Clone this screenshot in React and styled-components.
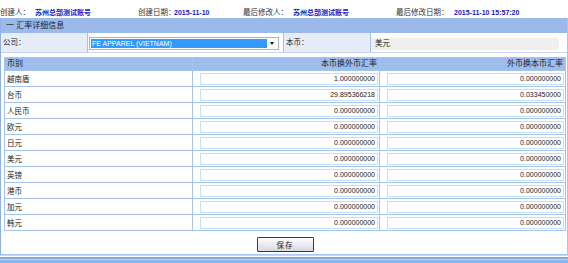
import React from 'react';
import styled, { createGlobalStyle } from 'styled-components';

const Global = createGlobalStyle`
  html, body { margin: 0; padding: 0; background: #fff; }
  body {
    font-family: "Liberation Sans", "Noto Sans CJK SC", sans-serif;
    font-size: 7px;
    color: #222;
  }
  * { box-sizing: border-box; }
`;

const Page = styled.div`
  width: 568px;
  height: 263px;
  overflow: hidden;
  background: #fff;
`;

const InfoBar = styled.div`
  display: grid;
  grid-template-columns: 35px 103px 36px 69px 50px 103px 58px 1fr;
  height: 18px;
  padding-top: 8px;
  line-height: 10px;
  white-space: nowrap;
`;

const InfoLabel = styled.span`
  color: #333;
  font-size: 7.5px;
`;

const InfoValue = styled.span`
  color: #1414c8;
  font-weight: bold;
`;

const Panel = styled.div`
  height: 237px;
  border-left: 1px solid #8eb0e6;
  border-right: 1px solid #a9c6f0;
  border-bottom: 1px solid #a9c6f0;
  display: flex;
  flex-direction: column;
`;

const TitleBar = styled.div`
  height: 15px;
  background: #9bb9ea;
  padding-left: 5px;
  font-size: 8px;
  line-height: 15px;
  color: #1e1e1e;
  white-space: nowrap;
`;

const CompanyRow = styled.div`
  display: grid;
  grid-template-columns: 87px 196px 87px 1fr;
  height: 20px;
  border-bottom: 1px solid #c4d6f2;
`;

const FieldLabel = styled.div`
  background: #e6edf8;
  border-right: 1px solid #a4c2ee;
  padding-left: 2px;
  line-height: 19px;
  font-size: 7.5px;
  white-space: nowrap;
`;

const FieldValue = styled.div`
  padding: ${(p) => (p.$select ? '4px 0 0 1px' : '5px 0 0 0')};
  border-right: ${(p) => (p.$divider ? '1px solid #a4c2ee' : 'none')};
`;

const SelectBox = styled.div`
  width: 190px;
  height: 13px;
  border: 1px solid #a9b4c2;
  background: #fff;
  display: flex;
  align-items: stretch;
  padding: 1px;
`;

const SelectText = styled.div`
  flex: 1;
  background: #3399ff;
  color: #fff;
  line-height: 9px;
  padding-left: 1px;
  white-space: nowrap;
`;

const SelectArrow = styled.div`
  width: 10px;
  display: flex;
  align-items: center;
  justify-content: center;
  &::after {
    content: '';
    border-left: 2.5px solid transparent;
    border-right: 2.5px solid transparent;
    border-top: 3px solid #111;
  }
`;

const ReadField = styled.div`
  width: 188px;
  height: 12px;
  background: #efefef;
  padding-left: 4px;
  line-height: 12px;
  font-size: 7.5px;
`;

const Table = styled.div`
  margin: 4px 0 0 3px;
  width: 562px;
  display: grid;
  grid-template-columns: 188px 187px 186px;
  border-left: 1px solid #a4c4f0;
  border-top: 1px solid #a4c4f0;
`;

const HeadCell = styled.div`
  height: 13px;
  background: #9ebdec;
  border-right: 1px solid #a4c4f0;
  border-bottom: 1px solid #a4c4f0;
  font-size: 8px;
  line-height: 12px;
  color: #1a1a1a;
  text-align: ${(p) => (p.$right ? 'right' : 'left')};
  padding: 0 2px;
  white-space: nowrap;
`;

const Cell = styled.div`
  height: 16px;
  border-right: 1px solid #a4c4f0;
  border-bottom: 1px solid #a4c4f0;
  display: flex;
  align-items: center;
  padding: ${(p) => (p.$input ? '0 1px 0 7px' : '0 2px')};
  color: #1a1a1a;
  font-size: ${(p) => (p.$input ? '7px' : '7.5px')};
  white-space: nowrap;
`;

const RateInput = styled.div`
  width: 100%;
  height: 12px;
  border: 1px solid #c3e1f6;
  background: #fff;
  text-align: right;
  padding-right: 2px;
  line-height: 10px;
  color: #222;
`;

const ButtonBar = styled.div`
  display: flex;
  justify-content: center;
  padding: 6px 0 0 2px;
`;

const SaveButton = styled.button`
  width: 57px;
  height: 15px;
  border: 1px solid #2c3a5c;
  border-radius: 1px;
  background: linear-gradient(#fefefe, #d6d7e3);
  font-family: "Liberation Sans", "Noto Sans CJK SC", sans-serif;
  font-size: 7.5px;
  color: #1a1a1a;
  padding: 0;
  letter-spacing: 1px;
`;

const Footer = styled.div`
  height: 8px;
  background: linear-gradient(
    #c6d9f4 0px, #c6d9f4 1px,
    #ffffff 1px, #ffffff 2px,
    #84aae6 2px, #84aae6 4px,
    #bcd3f3 4px, #bcd3f3 5px,
    #8fb4ea 5px, #8fb4ea 8px
  );
`;

const rates = [
  ['越南盾', '1.000000000', '0.000000000'],
  ['台币', '29.895366218', '0.033450000'],
  ['人民币', '0.000000000', '0.000000000'],
  ['欧元', '0.000000000', '0.000000000'],
  ['日元', '0.000000000', '0.000000000'],
  ['美元', '0.000000000', '0.000000000'],
  ['英镑', '0.000000000', '0.000000000'],
  ['港币', '0.000000000', '0.000000000'],
  ['加元', '0.000000000', '0.000000000'],
  ['韩元', '0.000000000', '0.000000000'],
];

export default function App() {
  return (
    <Page>
      <Global />
      <InfoBar>
        <InfoLabel>创建人：</InfoLabel>
        <InfoValue>苏州总部测试账号</InfoValue>
        <InfoLabel>创建日期：</InfoLabel>
        <InfoValue>2015-11-10</InfoValue>
        <InfoLabel>最后修改人：</InfoLabel>
        <InfoValue>苏州总部测试账号</InfoValue>
        <InfoLabel>最后修改日期：</InfoLabel>
        <InfoValue>2015-11-10 15:57:20</InfoValue>
      </InfoBar>
      <Panel>
        <TitleBar>一 汇率详细信息</TitleBar>
        <CompanyRow>
          <FieldLabel>公司：</FieldLabel>
          <FieldValue $select $divider>
            <SelectBox>
              <SelectText>FE APPAREL (VIETNAM)</SelectText>
              <SelectArrow />
            </SelectBox>
          </FieldValue>
          <FieldLabel>本币：</FieldLabel>
          <FieldValue>
            <ReadField>美元</ReadField>
          </FieldValue>
        </CompanyRow>
        <Table>
          <HeadCell>币别</HeadCell>
          <HeadCell $right>本币换外币汇率</HeadCell>
          <HeadCell $right>外币换本币汇率</HeadCell>
          {rates.map(([name, a, b]) => (
            <React.Fragment key={name}>
              <Cell>{name}</Cell>
              <Cell $input>
                <RateInput>{a}</RateInput>
              </Cell>
              <Cell $input>
                <RateInput>{b}</RateInput>
              </Cell>
            </React.Fragment>
          ))}
        </Table>
        <ButtonBar>
          <SaveButton>保存</SaveButton>
        </ButtonBar>
      </Panel>
      <Footer />
    </Page>
  );
}
